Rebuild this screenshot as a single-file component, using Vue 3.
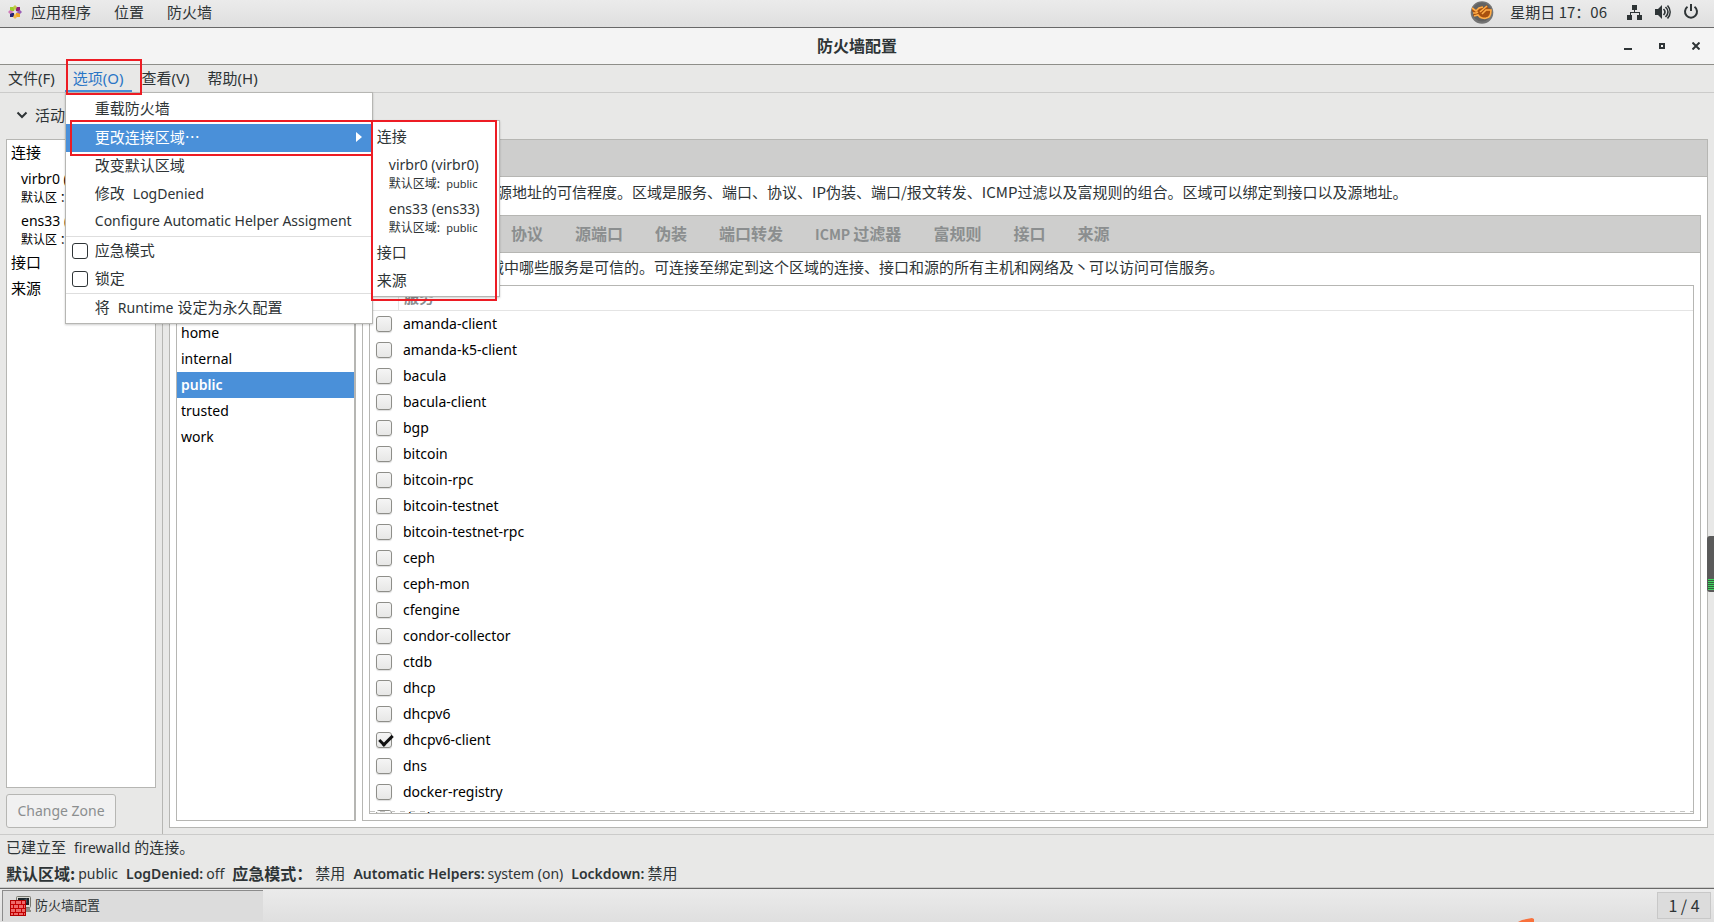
<script setup>
import { ref } from 'vue'

const bindings = ref([
  { name: 'virbr0', detail: 'virbr0 (virbr0)' },
  { name: 'ens33', detail: 'ens33 (ens33)' },
])
const zones = ['block', 'dmz', 'drop', 'external', 'home', 'internal', 'public', 'trusted', 'work']
const activeZone = ref('public')
const mainTabs = ['区域', '服务', 'IPSets']
const zoneTabs = [
  { text: '服务' }, { text: '端口' }, { text: '协议' }, { text: '源端口' }, { text: '伪装' },
  { text: '端口转发' }, { prefix: 'ICMP ', text: '过滤器' }, { text: '富规则' }, { text: '接口' }, { text: '来源' },
]
const services = [
  'amanda-client', 'amanda-k5-client', 'bacula', 'bacula-client', 'bgp', 'bitcoin', 'bitcoin-rpc',
  'bitcoin-testnet', 'bitcoin-testnet-rpc', 'ceph', 'ceph-mon', 'cfengine', 'condor-collector', 'ctdb',
  'dhcp', 'dhcpv6', 'dhcpv6-client', 'dns', 'docker-registry', 'docker-swarm',
]
const enabled = ref(['dhcpv6-client'])
const panic = ref(false)
const lockdown = ref(false)
</script>

<template>
  <div class="desktop">
    <header class="topbar">
      <button class="top-item apps">
        <svg class="logo" width="14" height="14" viewBox="0 0 14 14">
          <rect x="2" y="2" width="4" height="4" fill="#9ccd2a" />
          <rect x="8" y="2" width="4" height="4" fill="#932279" />
          <rect x="2" y="8" width="4" height="4" fill="#262577" />
          <rect x="8" y="8" width="4" height="4" fill="#efa724" />
          <path d="M7 0l2 2-2 4-2-4z" fill="#c3c94b" />
          <path d="M14 7l-2 2-4-2 4-2z" fill="#9a5fb5" />
          <path d="M7 14l-2-2 2-4 2 4z" fill="#f0b850" />
          <path d="M0 7l2-2 4 2-4 2z" fill="#d07ab8" />
        </svg>
        应用程序
      </button>
      <button class="top-item">位置</button>
      <button class="top-item">防火墙</button>
      <div class="tray">
        <svg width="24" height="24" viewBox="0 0 24 24">
          <circle cx="12" cy="12.500" r="11.300" fill="#747474" />
          <circle cx="12" cy="12" r="9.500" fill="#626262" />
          <path d="M2 7l4 3 2-2 4-2 1 2 4-3 1 3 3 1c1 4 0 7-3 8-3 2-8 2-10-1l-5 0 1-3-2-2z" fill="#a8500f" />
          <path d="M2 8l4 3 3-3 4-1M10 12l7-6M12 14l4-4 5 0c0 5-2 8-5 8M3 13l3 0 2-1M4 16l4-1c2 3 6 4 9 3" fill="none" stroke="#ffad48" stroke-width="1.600" />
        </svg>
        <span class="clock">星期日 17：06</span>
        <svg class="net" width="16" height="16" viewBox="0 0 16 16" fill="#2e3436">
          <path d="M5 1h5v5H8v2h5v3h2v5h-5v-5h2V9H4v2h1v5H0v-5h3V8h4V6H5z" />
        </svg>
        <svg class="vol" width="16" height="16" viewBox="0 0 16 16">
          <path d="M0 5h3l4-4v14l-4-4H0z" fill="#2e3436" />
          <path d="M8.500 5c2 2 2 4 0 6M10.500 3c3.300 3 3.300 7 0 10M12.500 1.500c3.500 4 3.500 9 0 13" fill="none" stroke="#2e3436" stroke-width="1.600" />
        </svg>
        <svg width="16" height="16" viewBox="0 0 16 16" fill="none" stroke="#2e3436" stroke-width="2">
          <path d="M4.500 2.800a6 6 0 1 0 7 0M8 0v7" />
        </svg>
      </div>
    </header>

    <div class="titlebar">
      <h1>防火墙配置</h1>
      <div class="window-buttons">
        <button aria-label="最小化"><svg width="8" height="8" viewBox="0 0 8 8"><path d="M0 6h8v2H0z" fill="#2e3436" /></svg></button>
        <button aria-label="最大化"><svg width="8" height="8" viewBox="0 0 8 8"><path d="M2 2h4v4H2z" fill="none" stroke="#2e3436" stroke-width="2" /></svg></button>
        <button aria-label="关闭"><svg width="8" height="8" viewBox="0 0 8 8"><path d="M0.500 0.500l7 7M7.500 0.500l-7 7" stroke="#2e3436" stroke-width="2" /></svg></button>
      </div>
    </div>

    <nav class="menubar">
      <button class="menu-title">文件(F)</button>
      <div class="menu-holder">
        <button class="menu-title open">选项(O)</button>
        <div class="mark mark-title"></div>
        <div class="menu">
          <button class="item">重载防火墙</button>
          <div class="sub-holder">
            <button class="item selected">更改连接区域⋯
              <svg width="6" height="10" viewBox="0 0 6 10"><path d="M0 0l6 5-6 5z" fill="#fff" /></svg>
            </button>
            <div class="menu submenu">
              <button class="item">连接</button>
              <button v-for="b in bindings" :key="b.name" class="item binding">
                <span class="latin">{{ b.detail }}</span>
                <span class="small">默认区域:<span class="value">public</span></span>
              </button>
              <button class="item">接口</button>
              <button class="item">来源</button>
            </div>
            <div class="mark mark-item"></div>
            <div class="mark mark-sub"></div>
          </div>
          <button class="item">改变默认区域</button>
          <button class="item">修改<span class="latin spaced">LogDenied</span></button>
          <button class="item latin">Configure Automatic Helper Assigment</button>
          <hr />
          <label class="item"><input v-model="panic" type="checkbox" />应急模式</label>
          <label class="item"><input v-model="lockdown" type="checkbox" />锁定</label>
          <hr />
          <button class="item">将<span class="latin spaced">Runtime</span><span class="after">设定为永久配置</span></button>
        </div>
      </div>
      <button class="menu-title">查看(V)</button>
      <button class="menu-title">帮助(H)</button>
    </nav>

    <main class="body">
      <aside class="side">
        <button class="expander">
          <svg width="12" height="8" viewBox="0 0 12 8"><path d="M1.500 1.500L6 6l4.500-4.500" fill="none" stroke="#2e3436" stroke-width="2" /></svg>
          活动的绑定
        </button>
        <ul class="box bindings">
          <li>连接</li>
          <li v-for="b in bindings" :key="b.name" class="double">
            <span class="latin">{{ b.detail }}</span>
            <span class="small">默认区 ：public</span>
          </li>
          <li>接口</li>
          <li>来源</li>
        </ul>
        <button class="change" disabled>Change Zone</button>
      </aside>

      <section class="config">
        <div class="mode">配置：<span>运行时</span></div>
        <div class="notebook outer">
          <div class="tabs"><button v-for="t in mainTabs" :key="t">{{ t }}</button></div>
          <p class="intro"><span class="lead latin">FirewallD</span>区域定义了绑定的网络连接、接口以及源地址的可信程度。区域是服务、端口、协议、IP伪装、端口/报文转发、ICMP过滤以及富规则的组合。区域可以绑定到接口以及源地址。</p>
          <div class="columns">
            <ul class="box zones">
              <li v-for="z in zones" :key="z" :class="{ active: z === activeZone }" @click="activeZone = z">{{ z }}</li>
            </ul>
            <div class="notebook inner">
              <div class="tabs">
                <button v-for="t in zoneTabs" :key="t.text"><span v-if="t.prefix" class="prefix">{{ t.prefix }}</span>{{ t.text }}</button>
              </div>
              <p>可以在这里定义区域中哪些服务是可信的。可连接至绑定到这个区域的连接、接口和源的所有主机和网络及丶可以访问可信服务。</p>
              <div class="box scroller">
                <table>
                  <thead><tr><th class="tick"></th><th>服务</th></tr></thead>
                  <tbody>
                    <tr v-for="s in services" :key="s">
                      <td class="tick"><input :id="s" v-model="enabled" type="checkbox" :value="s" /></td>
                      <td><label :for="s">{{ s }}</label></td>
                    </tr>
                  </tbody>
                </table>
              </div>
            </div>
          </div>
        </div>
      </section>
      <div class="meter"><i></i></div>
    </main>

    <footer class="status">
      <div>已建立至<span class="latin spaced">firewalld</span><span class="after">的连接。</span></div>
      <dl>
        <dt class="cjk">默认区域:</dt><dd>public</dd>
        <dt>LogDenied:</dt><dd>off</dd>
        <dt class="cjk">应急模式：</dt><dd class="cjk">禁用</dd>
        <dt>Automatic Helpers:</dt><dd>system (on)</dd>
        <dt>Lockdown:</dt><dd class="cjk">禁用</dd>
      </dl>
    </footer>

    <div class="taskbar">
      <button class="task">
        <svg width="22" height="20" viewBox="0 0 22 20">
          <rect x="6.500" y="0.500" width="14" height="11" rx="1" fill="#d8d8d2" stroke="#77776f" />
          <rect x="8" y="2" width="11" height="7" fill="#1c2529" />
          <path d="M12 5l5-3v5z" fill="#41525c" />
          <path d="M15 12h5v2h1v2h-6z" fill="#8d8d86" />
          <rect x="0.500" y="4.500" width="15" height="15" fill="#ee6a6a" stroke="#b30000" />
          <path d="M1 8.500h14M1 12.500h14M1 16.500h14M5.500 5v3M11.500 5v3M3.500 9v3M8.500 9v3M13.500 9v3M5.500 13v3M11.500 13v3M3.500 17v2M8.500 17v2M13.500 17v2" stroke="#c40000" />
        </svg>
        <span>防火墙配置</span>
      </button>
      <button class="workspace">1 / 4</button>
      <svg class="corner" width="17" height="4" viewBox="0 0 17 4"><path d="M0 4l4-2 10-2 2 1v3z" fill="#f9713c" /></svg>
    </div>
  </div>
</template>

<style>
body {
  margin: 0;
  overflow: hidden;
}
</style>

<style scoped>
* {
  box-sizing: border-box;
}
.desktop {
  position: relative;
  display: flex;
  flex-direction: column;
  height: 100vh;
  background: #e8e8e7;
  color: #2e3436;
  font: 15px/20px "Noto Sans CJK SC", sans-serif;
  white-space: nowrap;
}
button {
  border: 0;
  padding: 0;
  background: none;
  color: inherit;
  font: inherit;
  text-align: left;
}
ul, p, dl, dd, h1 {
  margin: 0;
  padding: 0;
  list-style: none;
}
svg {
  flex: none;
}
.latin {
  font-family: "Noto Sans", sans-serif;
  font-size: 14px;
}
.spaced {
  margin-left: 8px;
}
.after {
  margin-left: 4px;
}

.topbar {
  display: flex;
  align-items: center;
  gap: 23px;
  height: 28px;
  padding: 0 15px 3px 8px;
  border-bottom: 1px solid #686868;
  background: linear-gradient(#ebebeb, #dfdfdf);
}
.top-item {
  display: flex;
  align-items: center;
  gap: 9px;
}
.tray {
  display: flex;
  align-items: center;
  gap: 12px;
  margin-left: auto;
}
.clock {
  margin: 0 8px 0 4px;
}

.titlebar {
  display: grid;
  grid-template-columns: 1fr auto 1fr;
  align-items: center;
  height: 37px;
  padding: 0 14px;
  border-bottom: 1px solid #8e8e89;
  background: #f4f4f4;
}
h1 {
  grid-column: 2;
  padding-bottom: 2px;
  font-size: 16px;
  line-height: 20px;
}
.window-buttons {
  display: flex;
  justify-content: flex-end;
  gap: 26px;
}
.window-buttons button {
  width: 8px;
  height: 8px;
  line-height: 0;
}

.menubar {
  display: flex;
  gap: 2px;
  height: 28px;
  border-bottom: 1px solid #cbcbca;
}
.menu-title {
  height: 27px;
  padding: 0 8px 2px;
  font-family: "Noto Sans", "Noto Sans CJK SC", sans-serif;
}
.menu-holder {
  position: relative;
  z-index: 5;
}
.menu-title.open {
  border-bottom: 2px solid #4a90d9;
  padding-bottom: 0;
  color: #2a76c6;
}
.menu {
  position: absolute;
  top: 27px;
  left: 0;
  width: 308px;
  padding: 2px 0 1px;
  border: 1px solid #b6b6b3;
  background: #fff;
  box-shadow: 0 1px 2px #0003;
}
.item {
  display: block;
  position: relative;
  width: 100%;
  height: 28px;
  padding: 0 0 2px 29px;
  line-height: 26px;
}
.item.selected {
  display: flex;
  align-items: center;
  justify-content: space-between;
  padding-right: 10px;
  background: #4a90d9;
  color: #fff;
}
.item input {
  position: absolute;
  top: 6px;
  left: 6px;
}
hr {
  height: 1px;
  margin: 0;
  border: 0;
  background: #dedede;
}
.sub-holder {
  position: relative;
  margin-top: 1px;
}
.submenu {
  top: -4px;
  left: 306px;
  width: 128px;
}
.submenu .item {
  padding-left: 4px;
}
.submenu .binding {
  display: flex;
  flex-direction: column;
  height: 44px;
  padding: 4px 0 0 16px;
}
.binding .latin {
  line-height: 20px;
}
.small {
  font-size: 12px;
  line-height: 16px;
}
.value {
  margin-left: 6px;
  font-family: "Noto Sans", sans-serif;
  font-size: 11px;
}
.mark {
  position: absolute;
  border: 2px solid #ed1c24;
  pointer-events: none;
}
.mark-title {
  z-index: 2;
  top: -6px;
  left: 1px;
  width: 76px;
  height: 36px;
}
.mark-item {
  top: -4px;
  left: 4px;
  width: 303px;
  height: 36px;
}
.mark-sub {
  top: -4px;
  left: 305px;
  width: 126px;
  height: 181px;
}

.body {
  position: relative;
  display: flex;
  flex: 1;
  min-height: 0;
}
.side {
  display: flex;
  flex-direction: column;
  width: 163px;
  padding: 0 6px 6px;
  border-right: 1px solid #b6b6b3;
}
.expander {
  display: flex;
  align-items: center;
  gap: 7px;
  height: 46px;
  padding: 0 0 2px 10px;
  overflow: hidden;
}
.box {
  border: 1px solid #b6b6b3;
  background: #fff;
  color: #000;
}
.bindings {
  flex: 1;
  margin-bottom: 6px;
  overflow: hidden;
}
.bindings li {
  height: 26px;
  padding-left: 4px;
  line-height: 24px;
}
.bindings .double {
  display: flex;
  flex-direction: column;
  height: 42px;
  padding: 3px 0 0 14px;
}
.double .latin {
  line-height: 20px;
}
.double .small {
  line-height: 16px;
}
.change {
  align-self: flex-start;
  width: 110px;
  height: 34px;
  border: 1px solid #b6b6b3;
  border-radius: 3px;
  background: #f1f1f1;
  color: #8b8e8f;
  font-family: "Noto Sans", sans-serif;
  font-size: 14px;
  text-align: center;
}

.config {
  display: flex;
  flex: 1;
  flex-direction: column;
  min-width: 0;
  padding: 0 6px 6px;
}
.mode {
  height: 46px;
  line-height: 44px;
}
.notebook {
  display: flex;
  flex: 1;
  flex-direction: column;
  min-width: 0;
  min-height: 0;
  border: 1px solid #b6b6b3;
  background: #fff;
}
.tabs {
  display: flex;
  flex: none;
  gap: 32px;
  height: 37px;
  padding: 0 20px 2px;
  border-bottom: 1px solid #b6b6b3;
  background: #cececd;
  color: #8b8e8f;
  font-size: 16px;
  font-weight: 700;
}
.prefix {
  font-size: 14px;
  white-space: pre;
}
.outer > p {
  height: 38px;
  padding-left: 6px;
  line-height: 30px;
}
.lead {
  display: inline-block;
  width: 66px;
}
.columns {
  display: flex;
  flex: 1;
  gap: 6px;
  min-height: 0;
  padding: 0 6px 6px;
}
.zones {
  width: 180px;
  border-right-width: 2px;
}
.zones li {
  height: 26px;
  padding-left: 4px;
  font: 14px/26px "Noto Sans", sans-serif;
}
.zones .active {
  background: #4a90d9;
  color: #fff;
  font-weight: 600;
}
.inner {
  padding: 0 6px 6px;
}
.inner > .tabs {
  margin: 0 -6px;
}
.inner > p {
  height: 32px;
  line-height: 28px;
}
.scroller {
  position: relative;
  flex: 1;
  min-height: 0;
  overflow: hidden;
}
.scroller::after {
  content: "";
  position: absolute;
  right: 0;
  bottom: 1px;
  left: 0;
  height: 1px;
  background: repeating-linear-gradient(90deg, #c4c4c2 0 5px, #fff 5px 10px);
}
table {
  width: 100%;
  border-collapse: separate;
  border-spacing: 0;
}
th, td {
  height: 26px;
  padding: 0;
  text-align: left;
}
th {
  height: 25px;
  padding: 0 0 3px 5px;
  border-bottom: 1px solid #e4e4e4;
  color: #8b8e8f;
}
th.tick {
  border-right: 1px solid #e4e4e4;
}
.tick {
  width: 29px;
  padding-left: 6px;
  line-height: 0;
}
td label {
  display: block;
  padding-left: 4px;
  font: 14px/26px "Noto Sans", sans-serif;
}
input {
  display: block;
  appearance: none;
  width: 16px;
  height: 16px;
  margin: 0;
  border: 1px solid #2e3436;
  border-radius: 3px;
  background: #fff;
}
td input {
  border-color: #8e8e89;
  background: linear-gradient(#f5f5f5, #e7e7e6);
  box-shadow: 0 1px 1px #0002;
}
td input:checked::after {
  content: "";
  display: block;
  width: 11px;
  height: 5px;
  margin: 2px 0 0 2px;
  border: solid #111;
  border-width: 0 0 3px 3px;
  transform: rotate(-45deg);
}
.meter {
  position: absolute;
  right: 0;
  top: 443px;
  width: 7px;
  height: 56px;
  padding: 43px 0 2px 1px;
  border-radius: 3px 0 0 3px;
  background: #5a5a5a;
}
.meter i {
  display: block;
  height: 11px;
  background: repeating-linear-gradient(#3fd860 0 1px, #3b5a41 1px 2px);
}

.status {
  height: 54px;
  padding-left: 6px;
  border-top: 1px solid #cbcbca;
  border-bottom: 1px solid #cbcbca;
}
.status > div {
  height: 26px;
  line-height: 24px;
}
dl {
  display: flex;
  font: 14px/26px "Noto Sans", sans-serif;
}
dt {
  margin-right: 3px;
  font-weight: 600;
}
dd {
  margin-right: 8px;
}
.cjk {
  font-family: "Noto Sans CJK SC", sans-serif;
  line-height: 24px;
}
dt.cjk {
  font-size: 16px;
  font-weight: 700;
}
dd.cjk {
  font-size: 15px;
}

.taskbar {
  position: relative;
  display: flex;
  justify-content: space-between;
  align-items: center;
  height: 34px;
  padding: 0 3px 0 2px;
  border-top: 1px solid #686868;
  background: linear-gradient(#ebebeb, #dfdfdf);
}
.task {
  display: flex;
  align-items: center;
  gap: 3px;
  width: 261px;
  height: 31px;
  padding: 0 0 1px 7px;
  border-top: 1px solid #8b8b8b;
  border-left: 1px solid #8b8b8b;
  background: #dcdcdc;
  font-size: 13px;
}
.task span {
  padding-bottom: 2px;
}
.workspace {
  width: 54px;
  height: 27px;
  padding-bottom: 2px;
  border: 1px solid #c8c8c8;
  background: #dcdcdc;
  font-size: 16px;
  text-align: center;
}
.corner {
  position: absolute;
  right: 179px;
  bottom: 0;
}
</style>
